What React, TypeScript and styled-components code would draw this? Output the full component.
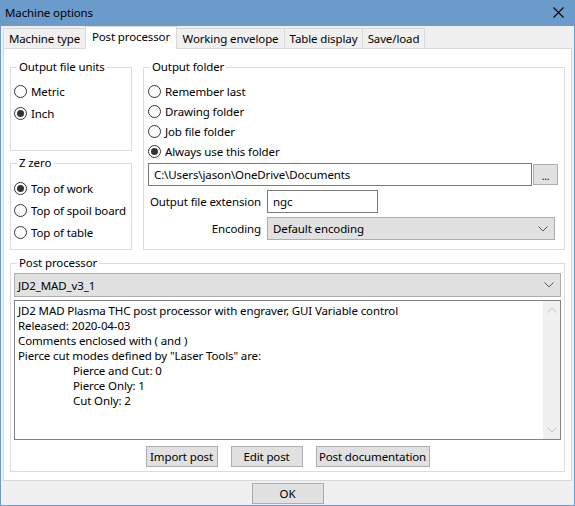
import React from "react";
import styled, { createGlobalStyle } from "styled-components";

const Global = createGlobalStyle`
  html, body { margin: 0; padding: 0; background: #fff; }
  body { font-family: "Noto Sans", "Segoe UI", sans-serif; font-size: 11.5px; letter-spacing: -0.12px; color: #000; }
  * { box-sizing: border-box; }
`;

const Window = styled.div`
  width: 575px;
  height: 506px;
  background: #6b9bca;
  padding: 0 1px 1px;
  display: flex;
  flex-direction: column;
`;

const TitleBar = styled.div`
  height: 26px;
  flex: none;
  display: flex;
  align-items: center;
  justify-content: space-between;
  padding: 0 10px 1px 4px;
`;

const Body = styled.div`
  flex: 1;
  background: #f0f0f0;
  padding: 0 2px;
  display: flex;
  flex-direction: column;
`;

const TabStrip = styled.div`
  height: 22px;
  flex: none;
  display: flex;
  align-items: flex-end;
`;

const Tab = styled.div<{ $w: number; $active?: boolean }>`
  width: ${(p) => p.$w}px;
  height: ${(p) => (p.$active ? 23 : 20)}px;
  margin-bottom: ${(p) => (p.$active ? -1 : 0)}px;
  margin-left: -1px;
  &:first-child { margin-left: 0; }
  position: relative;
  z-index: ${(p) => (p.$active ? 2 : 1)};
  background: ${(p) => (p.$active ? "#fff" : "#f0f0f0")};
  border: 1px solid #d9d9d9;
  border-bottom: none;
  display: flex;
  align-items: center;
  justify-content: center;
  padding-bottom: ${(p) => (p.$active ? 3 : 1)}px;
  white-space: nowrap;
`;

const Panel = styled.div`
  height: 433px;
  flex: none;
  background: #fff;
  border: 1px solid #d9d9d9;
  padding: 10px 6px 8px;
  display: flex;
  flex-direction: column;
  gap: 5px;
`;

const TopGrid = styled.div`
  height: 191px;
  display: grid;
  grid-template-columns: 122px 422px;
  column-gap: 11px;
`;

const LeftColumn = styled.div`
  display: flex;
  flex-direction: column;
  gap: 4px;
`;

const Group = styled.fieldset<{ $h?: number }>`
  margin: 0;
  padding: 0;
  border: 1px solid #dcdcdc;
  min-width: 0;
  ${(p) => (p.$h ? `height: ${p.$h}px;` : "")}
`;

const Legend = styled.legend`
  margin-left: 6px;
  padding: 0 2px;
  line-height: 16px;
  height: 16px;
`;

const GroupBody = styled.div<{ $pt: number; $pl: number; $pr?: number; $pb?: number }>`
  padding: ${(p) => p.$pt}px ${(p) => p.$pr ?? 4}px ${(p) => p.$pb ?? 0}px ${(p) => p.$pl}px;
  display: flex;
  flex-direction: column;
`;

const RadioRow = styled.div<{ $h: number }>`
  height: ${(p) => p.$h}px;
  display: flex;
  align-items: center;
  gap: 4px;
  white-space: nowrap;
`;

const RadioCircle = styled.span<{ $on?: boolean }>`
  width: 13px;
  height: 13px;
  flex: none;
  border-radius: 50%;
  border: 1px solid #333;
  background: #fff;
  display: flex;
  align-items: center;
  justify-content: center;
  &::after {
    content: "";
    width: 7px;
    height: 7px;
    border-radius: 50%;
    background: ${(p) => (p.$on ? "#333" : "transparent")};
  }
`;

const PathRow = styled.div`
  margin-top: 2px;
  display: flex;
  align-items: center;
  gap: 1px;
`;

const TextInput = styled.div<{ $w?: number }>`
  height: 23px;
  ${(p) => (p.$w ? `width: ${p.$w}px;` : "flex: 1;")}
  border: 1px solid #7a7a7a;
  background: #fff;
  padding: 0 5px;
  display: flex;
  align-items: center;
  white-space: nowrap;
  overflow: hidden;
`;

const SmallButton = styled.div`
  width: 25px;
  height: 21px;
  flex: none;
  background: #e1e1e1;
  border: 1px solid #adadad;
  display: flex;
  align-items: flex-end;
  justify-content: center;
  padding-bottom: 3px;
  font-size: 10px;
  line-height: 10px;
`;

const FormGrid = styled.div`
  margin-top: 4px;
  display: grid;
  grid-template-columns: 113px 1fr;
  column-gap: 6px;
  row-gap: 4px;
  align-items: center;
`;

const FormLabel = styled.div`
  text-align: right;
  white-space: nowrap;
`;

const Select = styled.div<{ $h: number; $mr?: number; $pl?: number }>`
  height: ${(p) => p.$h}px;
  margin-right: ${(p) => p.$mr ?? 0}px;
  background: #e1e1e1;
  border: 1px solid #adadad;
  display: flex;
  align-items: center;
  justify-content: space-between;
  padding: 0 6px 0 ${(p) => p.$pl ?? 5}px;
  white-space: nowrap;
`;

const TextBox = styled.div`
  height: 140px;
  margin-top: 3px;
  border: 1px solid #828282;
  background: #fff;
  display: flex;
`;

const TextContent = styled.div`
  flex: 1;
  padding: 2px 3px;
  line-height: 15px;
  white-space: nowrap;
  overflow: hidden;
`;

const Line = styled.div<{ $indent?: boolean }>`
  height: 15px;
  padding-left: ${(p) => (p.$indent ? 55 : 0)}px;
`;

const ScrollBar = styled.div`
  width: 17px;
  flex: none;
  background: #f0f0f0;
  display: flex;
  flex-direction: column;
  justify-content: space-between;
  align-items: center;
  padding: 6px 0 6px;
`;

const ButtonRow = styled.div`
  margin-top: 6px;
  display: flex;
  justify-content: center;
  gap: 13px;
`;

const PushButton = styled.div<{ $w: number }>`
  width: ${(p) => p.$w}px;
  height: 21px;
  background: #e1e1e1;
  border: 1px solid #adadad;
  display: flex;
  align-items: center;
  justify-content: center;
  white-space: nowrap;
`;

const Footer = styled.div`
  height: 24px;
  flex: none;
  padding-top: 2px;
  display: flex;
  justify-content: center;
  align-items: flex-start;
`;

const Chevron = ({ up, color = "#555" }: { up?: boolean; color?: string }) => (
  <svg width="10" height="6" viewBox="0 0 10 6">
    <polyline
      points={up ? "0.5,5.5 5,1 9.5,5.5" : "0.5,0.5 5,5 9.5,0.5"}
      fill="none"
      stroke={color}
      strokeWidth="1"
    />
  </svg>
);

const CloseIcon = () => (
  <svg width="11" height="11" viewBox="0 0 11 11">
    <path d="M0.5 0.5 L10.5 10.5 M10.5 0.5 L0.5 10.5" stroke="#000" strokeWidth="1.1" />
  </svg>
);

const tabs: { label: string; w: number; active?: boolean }[] = [
  { label: "Machine type", w: 83 },
  { label: "Post processor", w: 92, active: true },
  { label: "Working envelope", w: 109 },
  { label: "Table display", w: 79 },
  { label: "Save/load", w: 63 },
];

const Radio = ({ label, on, h }: { label: string; on?: boolean; h: number }) => (
  <RadioRow $h={h}>
    <RadioCircle $on={on} />
    <span>{label}</span>
  </RadioRow>
);

export default function App() {
  return (
    <>
      <Global />
      <Window>
        <TitleBar>
          <span>Machine options</span>
          <CloseIcon />
        </TitleBar>
        <Body>
          <TabStrip>
            {tabs.map((t) => (
              <Tab key={t.label} $w={t.w} $active={t.active}>
                {t.label}
              </Tab>
            ))}
          </TabStrip>
          <Panel>
            <TopGrid>
              <LeftColumn>
                <Group $h={92}>
                  <Legend>Output file units</Legend>
                  <GroupBody $pt={5} $pl={3}>
                    <Radio label="Metric" h={22} />
                    <Radio label="Inch" on h={22} />
                  </GroupBody>
                </Group>
                <Group $h={95}>
                  <Legend>Z zero</Legend>
                  <GroupBody $pt={6} $pl={3}>
                    <Radio label="Top of work" on h={22} />
                    <Radio label="Top of spoil board" h={22} />
                    <Radio label="Top of table" h={22} />
                  </GroupBody>
                </Group>
              </LeftColumn>
              <Group>
                <Legend>Output folder</Legend>
                <GroupBody $pt={6} $pl={4} $pr={6}>
                  <Radio label="Remember last" h={20} />
                  <Radio label="Drawing folder" h={20} />
                  <Radio label="Job file folder" h={20} />
                  <Radio label="Always use this folder" on h={20} />
                  <PathRow>
                    <TextInput>C:\Users\jason\OneDrive\Documents</TextInput>
                    <SmallButton>...</SmallButton>
                  </PathRow>
                  <FormGrid>
                    <FormLabel>Output file extension</FormLabel>
                    <TextInput $w={111}>ngc</TextInput>
                    <FormLabel>Encoding</FormLabel>
                    <Select $h={23} $mr={3}>
                      <span>Default encoding</span>
                      <Chevron />
                    </Select>
                  </FormGrid>
                </GroupBody>
              </Group>
            </TopGrid>
            <Group $h={217}>
              <Legend>Post processor</Legend>
              <GroupBody $pt={2} $pl={3} $pr={3} $pb={4}>
                <Select $h={24} $pl={3}>
                  <span>JD2_MAD_v3_1</span>
                  <Chevron />
                </Select>
                <TextBox>
                  <TextContent>
                    <Line>JD2 MAD Plasma THC post processor with engraver, GUI Variable control</Line>
                    <Line>Released: 2020-04-03</Line>
                    <Line>Comments enclosed with ( and )</Line>
                    <Line>Pierce cut modes defined by "Laser Tools" are:</Line>
                    <Line $indent>Pierce and Cut: 0</Line>
                    <Line $indent>Pierce Only: 1</Line>
                    <Line $indent>Cut Only: 2</Line>
                  </TextContent>
                  <ScrollBar>
                    <Chevron up color="#c2c2c2" />
                    <Chevron color="#c2c2c2" />
                  </ScrollBar>
                </TextBox>
                <ButtonRow>
                  <PushButton $w={72}>Import post</PushButton>
                  <PushButton $w={72}>Edit post</PushButton>
                  <PushButton $w={114}>Post documentation</PushButton>
                </ButtonRow>
              </GroupBody>
            </Group>
          </Panel>
          <Footer>
            <PushButton $w={72}>OK</PushButton>
          </Footer>
        </Body>
      </Window>
    </>
  );
}
